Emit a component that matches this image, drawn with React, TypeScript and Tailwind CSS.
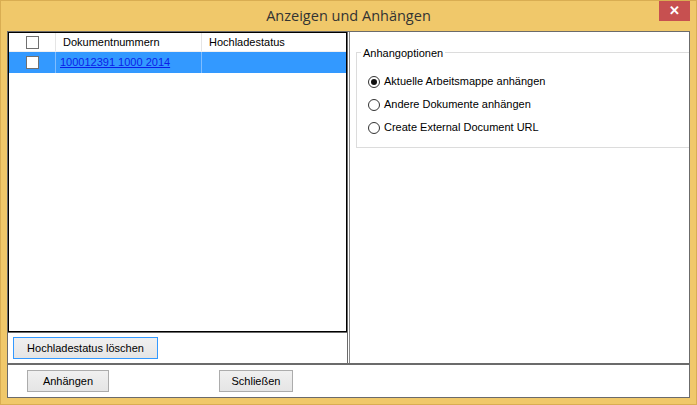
import React, { useState } from 'react';

const font = { fontFamily: '"Liberation Sans", Arial, sans-serif' };

const Check: React.FC<{ checked?: boolean }> = ({ checked }) => (
  <div className="w-[13px] h-[13px] border border-[#707070] bg-white flex items-center justify-center">
    {checked && <span className="text-[10px] leading-none">✓</span>}
  </div>
);

const Radio: React.FC<{ selected: boolean; label: string; onClick: () => void }> = ({ selected, label, onClick }) => (
  <div className="flex items-center h-[23px] cursor-default" onClick={onClick}>
    <div className="w-[12px] h-[12px] rounded-full border border-[#333] bg-white flex items-center justify-center ml-[11px]">
      {selected && <div className="w-[6px] h-[6px] rounded-full bg-[#111]" />}
    </div>
    <span className="ml-[4px] text-[11px] text-black">{label}</span>
  </div>
);

const Button: React.FC<{ label: string; focused?: boolean; className?: string }> = ({ label, focused, className }) => (
  <button
    className={`h-[22px] border ${focused ? 'border-[#3399ff]' : 'border-[#acacac]'} bg-gradient-to-b from-[#f0f0f0] to-[#e5e5e5] text-[11px] text-black flex items-center justify-center ${className ?? ''}`}
  >
    {label}
  </button>
);

export default function App() {
  const [option, setOption] = useState(0);
  const options = ['Aktuelle Arbeitsmappe anhängen', 'Andere Dokumente anhängen', 'Create External Document URL'];

  return (
    <div style={font} className="w-[697px] h-[405px] bg-[#f0c86a] border border-[#d9ad52] flex flex-col relative overflow-hidden">
      {/* title bar */}
      <div className="h-[30px] flex items-center justify-center text-[14.5px] text-[#333] pb-[1px]" style={{ fontFamily: '"Open Sans", "Noto Sans", sans-serif' }}>
        Anzeigen und Anhängen
      </div>
      <div className="absolute right-[6px] top-0 w-[31px] h-[20px] bg-[#c75050] flex items-center justify-center text-white text-[13px] font-bold">
        ✕
      </div>

      {/* content */}
      <div className="flex-1 mx-[6px] mb-[6px] border border-[#6b6b6b] bg-white flex flex-col">
        <div className="flex h-[331px]">
          {/* left panel */}
          <div className="w-[340px] border-r border-[#6b6b6b] flex flex-col">
            <div className="h-[300px] border border-black flex flex-col">
              <div className="flex h-[19px] text-[11px] text-black items-center border-b border-[#f0f0f0]">
                <div className="w-[47px] h-full flex items-center justify-center border-r border-[#e5e5e5]">
                  <Check />
                </div>
                <div className="w-[146px] h-full flex items-center pl-[7px] border-r border-[#e5e5e5]">Dokumentnummern</div>
                <div className="flex-1 h-full flex items-center pl-[7px]">Hochladestatus</div>
              </div>
              <div className="flex h-[21px] bg-[#3399ff] text-[11px] items-center">
                <div className="w-[47px] h-full flex items-center justify-center border-r border-[#7fbdff]">
                  <Check />
                </div>
                <div className="w-[146px] h-full flex items-center pl-[4px] border-r border-[#7fbdff]">
                  <span className="text-[#0b1ee8] underline">100012391 1000 2014</span>
                </div>
                <div className="flex-1 h-full" />
              </div>
              <div className="flex-1" />
            </div>
            <div className="flex-1 flex items-center pl-[5px] border-t border-[#6b6b6b]">
              <Button label="Hochladestatus löschen" focused className="w-[145px]" />
            </div>
          </div>

          {/* right panel */}
          <div className="flex-1 ml-[1px] border-l border-[#8a8a8a] pl-[6px] pt-[20px] overflow-hidden">
            <div className="relative border border-[#dcdcdc] border-r-0 h-[96px] pt-[17px]">
              <span className="absolute -top-[8px] left-[4px] bg-white px-[2px] text-[11px] text-black">Anhangoptionen</span>
              {options.map((o, i) => (
                <Radio key={o} label={o} selected={option === i} onClick={() => setOption(i)} />
              ))}
            </div>
          </div>
        </div>

        {/* bottom bar */}
        <div className="flex-1 border-t-2 border-[#6b6b6b] flex items-center">
          <Button label="Anhängen" className="w-[82px] ml-[19px]" />
          <Button label="Schließen" className="w-[74px] ml-[110px]" />
        </div>
      </div>
    </div>
  );
}
